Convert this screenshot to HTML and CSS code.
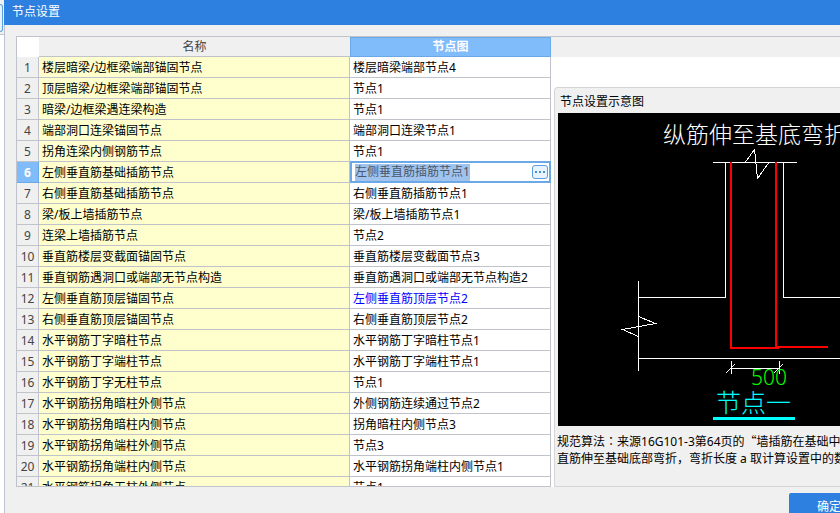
FILE: index.html
```html
<!DOCTYPE html>
<html lang="zh-CN">
<head>
    <meta charset="UTF-8">
    <meta name="viewport" content="width=device-width, initial-scale=1.0">
    <title>节点设置</title>
    <link rel="stylesheet" href="styles.css">
</head>
<body>
    <div class="backdrop">
        <div class="backdrop-tab"></div>
    </div>
    <div class="dialog">
        <h1 class="title">节点设置</h1>

        <div class="content">
            <div class="table-wrap">
                <table class="nodes">
                    <colgroup>
                        <col class="col-num">
                        <col class="col-name">
                        <col class="col-node">
                    </colgroup>
                    <thead>
                        <tr><td class="corner"></td><th>名称</th><th class="active">节点图</th></tr>
                    </thead>
                    <tbody>
                        <tr><th>1</th><td>楼层暗梁/边框梁端部锚固节点</td><td>楼层暗梁端部节点4</td></tr>
                        <tr><th>2</th><td>顶层暗梁/边框梁端部锚固节点</td><td>节点1</td></tr>
                        <tr><th>3</th><td>暗梁/边框梁遇连梁构造</td><td>节点1</td></tr>
                        <tr><th>4</th><td>端部洞口连梁锚固节点</td><td>端部洞口连梁节点1</td></tr>
                        <tr><th>5</th><td>拐角连梁内侧钢筋节点</td><td>节点1</td></tr>
                        <tr>
                            <th class="active">6</th>
                            <td>左侧垂直筋基础插筋节点</td>
                            <td class="editing">
                                <div class="editor">
                                    <input type="text" value="左侧垂直筋插筋节点1" aria-label="节点图">
                                    <button class="more" type="button" aria-label="选择节点">
                                        <svg width="14" height="12" viewBox="0 0 14 12">
                                            <path d="M2 5h2v2H2zM6 5h2v2H6zM10 5h2v2h-2z" fill="#4393d8"/>
                                        </svg>
                                    </button>
                                </div>
                            </td>
                        </tr>
                        <tr><th>7</th><td>右侧垂直筋基础插筋节点</td><td>右侧垂直筋插筋节点1</td></tr>
                        <tr><th>8</th><td>梁/板上墙插筋节点</td><td>梁/板上墙插筋节点1</td></tr>
                        <tr><th>9</th><td>连梁上墙插筋节点</td><td>节点2</td></tr>
                        <tr><th>10</th><td>垂直筋楼层变截面锚固节点</td><td>垂直筋楼层变截面节点3</td></tr>
                        <tr><th>11</th><td>垂直钢筋遇洞口或端部无节点构造</td><td>垂直筋遇洞口或端部无节点构造2</td></tr>
                        <tr><th>12</th><td>左侧垂直筋顶层锚固节点</td><td class="changed">左侧垂直筋顶层节点2</td></tr>
                        <tr><th>13</th><td>右侧垂直筋顶层锚固节点</td><td>右侧垂直筋顶层节点2</td></tr>
                        <tr><th>14</th><td>水平钢筋丁字暗柱节点</td><td>水平钢筋丁字暗柱节点1</td></tr>
                        <tr><th>15</th><td>水平钢筋丁字端柱节点</td><td>水平钢筋丁字端柱节点1</td></tr>
                        <tr><th>16</th><td>水平钢筋丁字无柱节点</td><td>节点1</td></tr>
                        <tr><th>17</th><td>水平钢筋拐角暗柱外侧节点</td><td>外侧钢筋连续通过节点2</td></tr>
                        <tr><th>18</th><td>水平钢筋拐角暗柱内侧节点</td><td>拐角暗柱内侧节点3</td></tr>
                        <tr><th>19</th><td>水平钢筋拐角端柱外侧节点</td><td>节点3</td></tr>
                        <tr><th>20</th><td>水平钢筋拐角端柱内侧节点</td><td>水平钢筋拐角端柱内侧节点1</td></tr>
                        <tr><th>21</th><td>水平钢筋拐角无柱外侧节点</td><td>节点1</td></tr>
                    </tbody>
                </table>
            </div>

            <div class="side">
                <div class="side-head"></div>
                <section class="preview">
                    <h2>节点设置示意图</h2>
                    <svg class="diagram" width="323" height="313" viewBox="0 0 323 313">
                        <rect width="323" height="313" fill="#000"/>
                        <text class="cad-title" x="105" y="30">纵筋伸至基底弯折</text>
                        <!-- 混凝土轮廓 -->
                        <g fill="none" stroke="#fff" stroke-width="1" shape-rendering="crispEdges">
                            <path d="M155 49.5H239"/>
                            <path d="M187.5 49L196.5 36.5L199.5 65.5L210.5 50"/>
                            <path d="M167.5 49V184.5H80"/>
                            <path d="M225.5 49V184.5H323"/>
                            <path d="M80.5 168V258"/>
                            <path d="M80.5 203.5L97.5 210.5L64.5 216.5L80.5 223.5"/>
                            <path d="M80 245.5H323"/>
                            <path d="M173.5 248V261M221.5 248V261M173 255.5H222"/>
                            <path d="M168 260L177 251M216 260L225 251"/>
                        </g>
                        <!-- 钢筋 -->
                        <g fill="none" stroke="#f00" stroke-width="2" shape-rendering="crispEdges">
                            <path d="M173 49V235H221"/>
                            <path d="M218 49V234H270"/>
                        </g>
                        <text class="cad-size" x="193" y="272">500</text>
                        <text class="cad-name" x="158" y="299">节点一</text>
                        <rect x="155" y="304" width="82" height="3" fill="#0ff"/>
                    </svg>
                    <p>规范算法<span lang="zh-TW">：</span>来源16G101-3第64页的<span lang="zh-TW">“</span>墙插筋在基础中<br>直筋伸至基础底部弯折，弯折长度 a 取计算设置中的数</p>
                </section>
            </div>
        </div>

        <div class="footer">
            <button class="ok" type="button">确定</button>
        </div>
    </div>
</body>
</html>
```
FILE: styles.css
```css
* {
    box-sizing: border-box;
}
body {
    display: flex;
    height: 100vh;
    margin: 0;
    overflow: hidden;
    background-color: #fff;
    color: #000;
    font-family: "Noto Sans", "Noto Sans CJK SC", sans-serif;
    font-size: 12px;
}
h1, h2, p {
    margin: 0;
    font-size: 12px;
    font-weight: normal;
}
.backdrop {
    flex: 0 0 4px;
    height: 35px;
    padding-top: 4px;
    overflow: hidden;
    background-color: #f0f0f0;
    border-bottom: 1px solid #c3c6cc;
}
.backdrop-tab {
    width: 3px;
    height: 28px;
    border: 1px solid #5ba0e0;
    border-left: none;
    border-radius: 0 3px 3px 0;
    background-color: #e6f1fc;
}

/* 对话框，右侧超出窗口 */
.dialog {
    display: flex;
    flex: 1;
    flex-direction: column;
    min-width: 0;
    margin-right: -41px;
    background-color: #f0f0f0;
}
.title {
    height: 25px;
    padding-left: 8px;
    background-color: #2d7fe0;
    color: #fff;
    line-height: 24px;
}
.content {
    display: flex;
    flex: 1;
    min-height: 0;
    padding: 11px 0 0 11px;
    border-left: 1px solid #bcc2cf;
}

/* 节点表 */
.table-wrap {
    flex: 0 0 535px;
    overflow: hidden;
    border: 1px solid #c0c3ca;
    border-right: none;
    background-color: #fff;
}
.nodes {
    width: 100%;
    table-layout: fixed;
    border-collapse: separate;
    border-spacing: 0;
}
.col-num {
    width: 22px;
}
.col-name {
    width: 311px;
}
.nodes th,
.nodes td {
    height: 21px;
    padding: 2px 3px 0;
    border-right: 1px solid #c0c3ca;
    border-bottom: 1px solid #c0c3ca;
    line-height: 18px;
    white-space: nowrap;
}
.nodes th {
    padding: 2px 0 0;
    background-color: #f0f0f0;
    color: #444;
    font-weight: normal;
    text-align: center;
}
.nodes thead th,
.nodes thead td {
    height: 20px;
    padding-top: 1px;
    border-right: none;
}
.nodes thead .corner {
    border-bottom-color: #fff;
}
.nodes tbody td:nth-child(2) {
    background-color: #ffffce;
}
.nodes .active {
    background-color: #80bbfa;
    border-color: #6aa8e8;
    color: #fff;
    font-weight: bold;
}
.nodes thead .active {
    padding-top: 0;
    border: 1px solid #6aa8e8;
}
.nodes .changed {
    color: #00f;
}
.nodes .editing {
    padding: 0;
    border: 2px solid #6aa8e8;
    border-top-width: 1px;
    box-shadow: 0 -1px 0 #6aa8e8;
}
.editor {
    display: flex;
    align-items: center;
    justify-content: space-between;
    height: 18px;
    padding: 0 1px 0 3px;
}
.editor input {
    height: 17px;
    padding: 0;
    border: none;
    outline: none;
    background-color: #a0c3ee;
    color: #4b5668;
    font: inherit;
    field-sizing: content;
}
.more {
    display: flex;
    padding: 0;
    border: 1px solid #5ba0e0;
    border-radius: 3px;
    background-color: #e9f3fc;
}

/* 示意图 */
.side {
    display: flex;
    flex: 1;
    flex-direction: column;
    min-width: 0;
    padding-left: 3px;
    background-color: #fff;
}
.side-head {
    height: 21px;
    margin: 0 0 30px -3px;
    border-top: 1px solid #c0c3ca;
    background-color: #f0f0f0;
}
.preview {
    flex: 1;
    padding-left: 2px;
    border: 1px solid #d5d5d5;
    border-right: none;
    border-radius: 4px 0 0 0;
    background-color: #f0f0f0;
}
.preview h2 {
    height: 25px;
    padding-left: 3px;
    line-height: 27px;
}
.preview p {
    padding-top: 7px;
    line-height: 17px;
    white-space: nowrap;
}
.preview span {
    font-family: "Noto Sans CJK TC", sans-serif;
    line-height: 1;
}
.diagram {
    display: block;
    margin-left: 1px;
}
.diagram text {
    font-family: "Noto Sans", "Noto Sans CJK SC", sans-serif;
    font-weight: 300;
}
.cad-title {
    fill: #fff;
    font-size: 23px;
}
.cad-size {
    fill: #0f0;
    font-size: 21px;
}
.cad-name {
    fill: #0ff;
    font-size: 25px;
}

.footer {
    display: flex;
    justify-content: flex-end;
    height: 26px;
    padding: 6px 12px 0 0;
    border-left: 1px solid #bcc2cf;
}
.ok {
    width: 80px;
    height: 28px;
    padding: 0;
    border: none;
    border-radius: 2px;
    background-color: #2d7fe0;
    color: #fff;
    font: inherit;
    line-height: 28px;
}
```
